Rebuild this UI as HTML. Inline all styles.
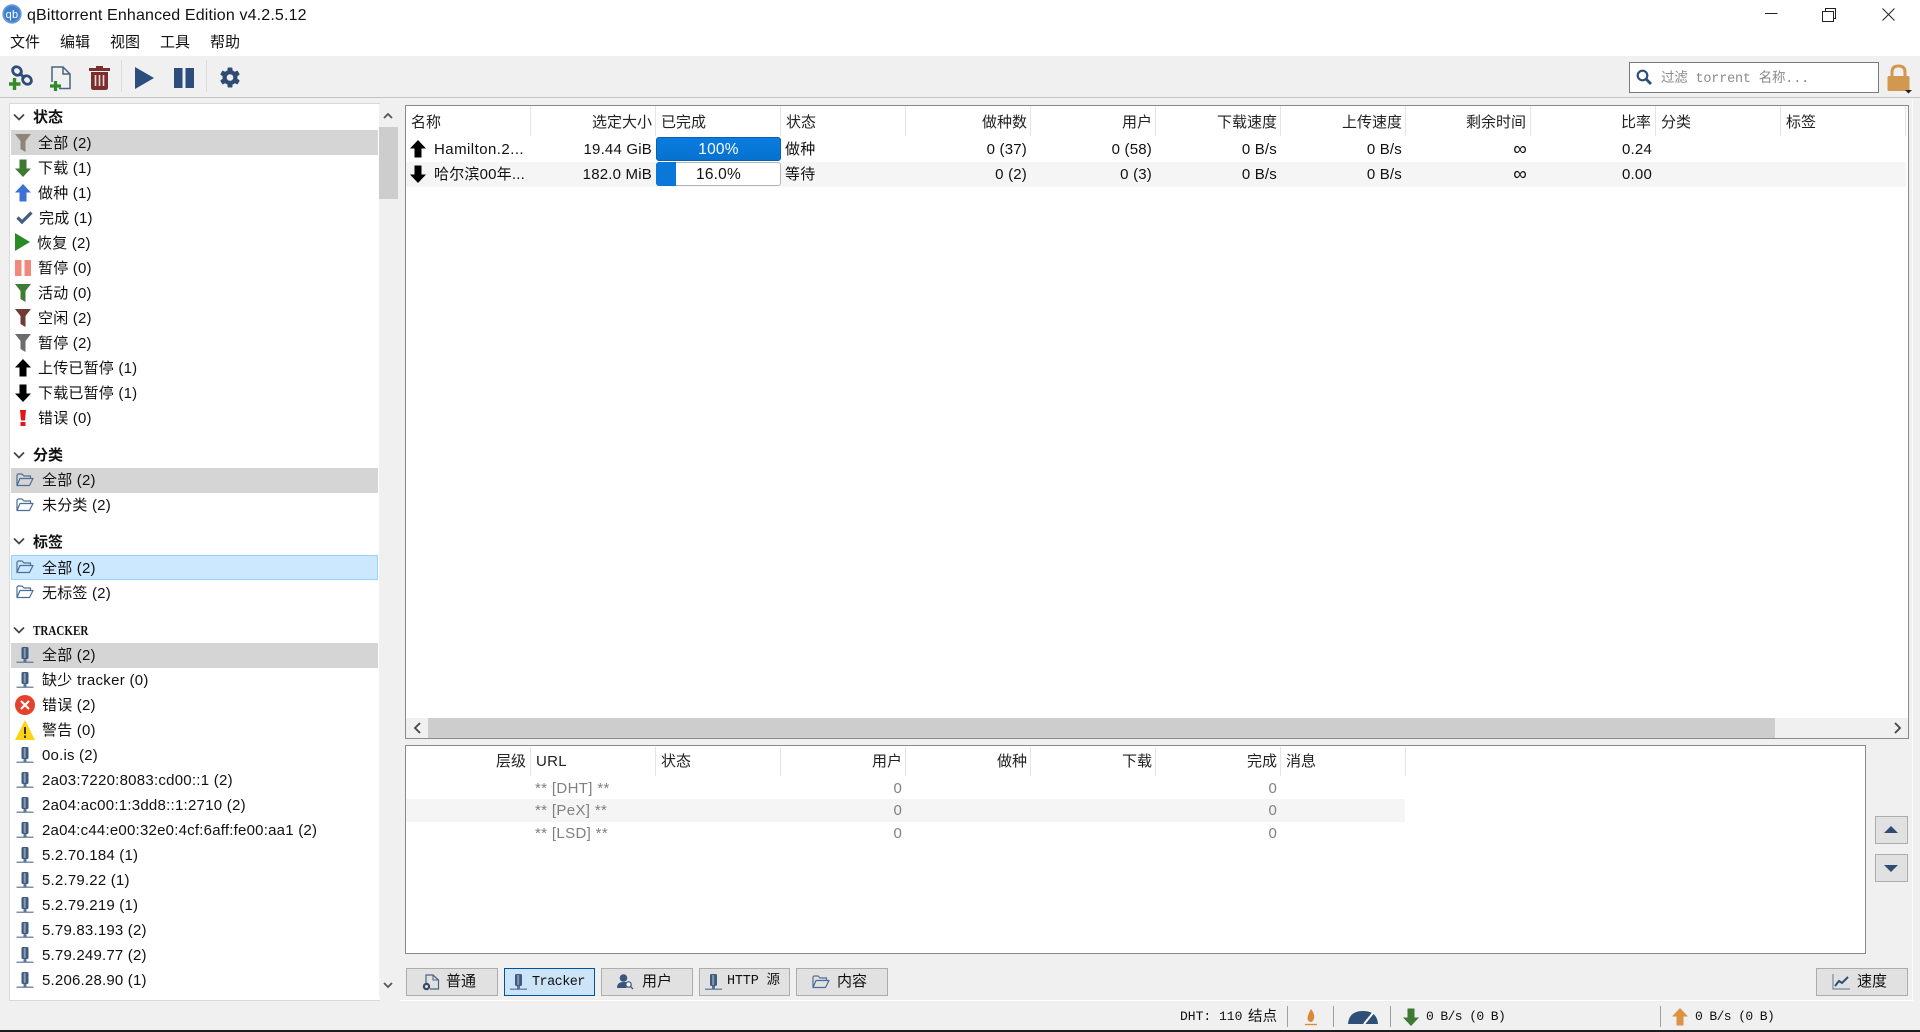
<!DOCTYPE html>
<html lang="zh"><head><meta charset="utf-8"><title>qBittorrent Enhanced Edition v4.2.5.12</title>
<style>
*{box-sizing:border-box}
html,body{margin:0;padding:0;width:1920px;height:1032px;overflow:hidden;background:#f0f0f0;font-family:"Liberation Sans","Noto Sans CJK SC",sans-serif;font-size:15px;color:#111;letter-spacing:.2px}
div,svg,span.a{position:absolute}
.t{position:absolute;white-space:nowrap;line-height:20px;height:20px;margin-top:1px}
.n{margin-top:0}
.r{text-align:right}
.h{color:#222;letter-spacing:0}
.m{font-family:"Liberation Mono","Noto Sans CJK SC",monospace}
.g{color:#808080}
.sep{position:absolute;width:1px;background:#e5e5e5}
.btn{position:absolute;background:#e1e1e1;border:1px solid #adadad;height:28px}
</style></head><body>
<svg width="0" height="0" style="position:absolute">
<defs>
<symbol id="funnel" viewBox="0 0 16 18"><path d="M0 0H16L10.500 7V18L5.500 15V7Z"/></symbol>
<symbol id="up" viewBox="0 0 16 18"><path d="M8 0L16 8.500H11.500V17.500H4.500V8.500H0Z"/></symbol>
<symbol id="dn" viewBox="0 0 16 18"><path d="M8 18L16 9.500H11.500V.5H4.500V9.500H0Z"/></symbol>
<symbol id="folder" viewBox="0 0 18 14"><path d="M1 12.500V2L2 1H6L8 3H14.500V5.500M1 12.500L4 5.500H17L13.500 12.500Z" fill="none" stroke="#4b6e96" stroke-width="1.200" stroke-linejoin="round"/></symbol>
<symbol id="trk" viewBox="0 0 17 16"><rect x="5" y="0" width="7" height="12" rx="1.500" fill="#3d5a80"/><rect x="7.200" y="1" width="2" height="10" fill="#8d99a8"/><rect x="7" y="12" width="3" height="3" fill="#5d7594"/><rect x="0" y="14.600" width="17" height="1.200" fill="#5a7596"/></symbol>
</defs></svg>

<!-- title bar -->
<div style="left:0;top:0;width:1920px;height:56px;background:#fff"></div>
<svg style="left:2px;top:4px" width="20" height="20" viewBox="0 0 20 20"><circle cx="10" cy="10" r="9.700" fill="#6c9ad6"/><circle cx="10" cy="10" r="8" fill="#3f7fcf"/><text x="10" y="14" font-size="11" font-family="Liberation Sans" fill="#fff" text-anchor="middle">qb</text></svg>
<span class="t" style="left:27px;top:5px;font-size:16px;letter-spacing:.15px">qBittorrent Enhanced Edition v4.2.5.12</span>
<span class="t" style="left:10px;top:32px;letter-spacing:0">文件</span>
<span class="t" style="left:60px;top:32px;letter-spacing:0">编辑</span>
<span class="t" style="left:110px;top:32px;letter-spacing:0">视图</span>
<span class="t" style="left:160px;top:32px;letter-spacing:0">工具</span>
<span class="t" style="left:210px;top:32px;letter-spacing:0">帮助</span>
<svg style="left:1765px;top:8px" width="130" height="14" viewBox="0 0 130 14" fill="none" stroke="#222" stroke-width="1"><path d="M0 5.500H12.500"/><path d="M57.500 3.500H68.500V13.500H57.500ZM60.500 3.500V.5H70.500V10.500H68.500"/><path d="M117.500 .5L129.500 12.500M129.500 .5L117.500 12.500"/></svg>

<!-- toolbar -->
<div style="left:0;top:97px;width:1920px;height:1px;background:#c4c4c4"></div>
<svg style="left:9px;top:65px" width="25" height="26" viewBox="0 0 25 26" fill="none"><g stroke="#2f4d78" stroke-width="2.800"><ellipse cx="8" cy="6" rx="4.600" ry="4" transform="rotate(40 8 6)"/><ellipse cx="18" cy="15" rx="4.600" ry="4" transform="rotate(40 18 15)"/><path d="M10 8L16 13"/></g><path d="M5.500 13V25M0 19H11.500" stroke="#338a2c" stroke-width="3.400"/></svg>
<svg style="left:50px;top:66px" width="22" height="25" viewBox="0 0 22 25" fill="none"><path d="M2 16V1H13L20 8V22.500H9" stroke="#4a6380" stroke-width="1.500"/><path d="M13 1V8H20" stroke="#4a6380" stroke-width="1.500"/><path d="M5.500 15V25M0 20H11" stroke="#338a2c" stroke-width="3.200"/></svg>
<svg style="left:89px;top:66px" width="21" height="24" viewBox="0 0 21 24"><path fill="#7b2f2d" d="M7 0H14V2H21V5H0V2H7ZM2 6H19V21.500Q19 24 16.500 24H4.500Q2 24 2 21.500Z"/><path d="M6.500 9V20M10.500 9V20M14.500 9V20" stroke="#e8d8d8" stroke-width="1.600"/></svg>
<div class="sep" style="left:121px;top:60px;height:32px;background:#dcdcdc"></div>
<svg style="left:135px;top:67px" width="20" height="22" viewBox="0 0 20 22"><path fill="#2c4d7d" d="M0 0L19 11L0 22Z"/></svg>
<svg style="left:174px;top:68px" width="20" height="20" viewBox="0 0 20 20"><path fill="#2c4d7d" d="M0 0H8.500V20H0ZM11.500 0H20V20H11.500Z"/></svg>
<div class="sep" style="left:206px;top:60px;height:32px;background:#dcdcdc"></div>
<svg style="left:220px;top:67px" width="20" height="21" viewBox="0 0 20 20"><g fill="#2f4a73"><circle cx="10" cy="10" r="7.500"/><rect x="7.500" y="0" width="5" height="20" rx="1"/><rect x="7.500" y="0" width="5" height="20" rx="1" transform="rotate(60 10 10)"/><rect x="7.500" y="0" width="5" height="20" rx="1" transform="rotate(120 10 10)"/></g><circle cx="10" cy="10" r="3.300" fill="#f0f0f0"/></svg>
<div style="left:1629px;top:62px;width:250px;height:31px;background:#fff;border:1px solid #7a7a7a"></div>
<svg style="left:1636px;top:69px" width="16" height="16" viewBox="0 0 16 16" fill="none" stroke="#2f4d78"><circle cx="6.500" cy="6.500" r="4.800" stroke-width="2.200"/><path d="M10 10L15 15" stroke-width="2.800"/></svg>
<span class="t m" style="left:1661px;top:69px;color:#8a8a8a;font-size:13.5px;letter-spacing:-.2px">过滤 torrent 名称...</span>
<svg style="left:1886px;top:64px" width="26" height="30" viewBox="0 0 26 30"><path d="M6 12V8Q6 2 12.500 2T19 8V12" fill="none" stroke="#d2984f" stroke-width="3"/><rect x="1.500" y="12" width="22" height="15" rx="1.500" fill="#d2984f"/><path d="M19 26H26L22.500 29.500Z" fill="#222"/></svg>

<!-- sidebar -->
<div style="left:9px;top:103px;width:371px;height:898px;background:#fff;border:1px solid #dadada;border-right:0"></div>
<div style="left:379px;top:104px;width:20px;height:892px;background:#f0f0f0"></div>
<div style="left:379px;top:127px;width:19px;height:72px;background:#cdcdcd"></div>
<svg style="left:383px;top:112px" width="10" height="7" viewBox="0 0 10 7" fill="none" stroke="#555" stroke-width="1.800"><path d="M1 6L5 2L9 6"/></svg>
<svg style="left:383px;top:982px" width="10" height="7" viewBox="0 0 10 7" fill="none" stroke="#555" stroke-width="1.800"><path d="M1 1L5 5L9 1"/></svg>
<div style="left:11px;top:130px;width:367px;height:25px;background:#d5d5d5"></div>
<div style="left:11px;top:468px;width:367px;height:25px;background:#d5d5d5"></div>
<div style="left:11px;top:555px;width:367px;height:25px;background:#cce8ff;border:1px solid #99d1ff"></div>
<div style="left:11px;top:643px;width:367px;height:25px;background:#d5d5d5"></div>

<svg style="left:12px;top:113px" width="14" height="9" viewBox="0 0 14 9" fill="none" stroke="#444" stroke-width="1.700"><path d="M2 1.500L7 6.500L12 1.500"/></svg>
<span class="t" style="left:33px;top:107px;font-weight:700;font-size:15px;letter-spacing:0">状态</span>
<svg style="left:12px;top:451px" width="14" height="9" viewBox="0 0 14 9" fill="none" stroke="#444" stroke-width="1.700"><path d="M2 1.500L7 6.500L12 1.500"/></svg>
<span class="t" style="left:33px;top:445px;font-weight:700;letter-spacing:0">分类</span>
<svg style="left:12px;top:537px" width="14" height="9" viewBox="0 0 14 9" fill="none" stroke="#444" stroke-width="1.700"><path d="M2 1.500L7 6.500L12 1.500"/></svg>
<span class="t" style="left:33px;top:532px;font-weight:700;letter-spacing:0">标签</span>
<svg style="left:12px;top:626px" width="14" height="9" viewBox="0 0 14 9" fill="none" stroke="#444" stroke-width="1.700"><path d="M2 1.500L7 6.500L12 1.500"/></svg>
<span class="t" style="left:33px;top:621px;font-weight:700;font-family:'Liberation Serif',serif;font-size:14px;letter-spacing:0;transform:scaleX(.79);transform-origin:0 50%">TRACKER</span>

<svg style="left:15px;top:134px;color:#8c8578" width="16" height="18" fill="currentColor"><use href="#funnel"/></svg>
<svg style="left:15px;top:159px;color:#3f7a35" width="16" height="18" fill="currentColor"><use href="#dn"/></svg>
<svg style="left:15px;top:184px;color:#3e70d6" width="16" height="18" fill="currentColor"><use href="#up"/></svg>
<svg style="left:16px;top:211px" width="17" height="13" viewBox="0 0 17 13" fill="none" stroke="#3f5e86" stroke-width="3.200"><path d="M1.500 6.500L6 11L15.500 1.500"/></svg>
<svg style="left:15px;top:233px" width="15" height="18" viewBox="0 0 15 18"><path fill="#2a8a26" d="M0 0L15 9L0 18Z"/></svg>
<svg style="left:15px;top:260px" width="16" height="16" viewBox="0 0 16 16"><path fill="#f2877c" d="M0 0H6.500V16H0ZM9.500 0H16V16H9.500Z"/></svg>
<svg style="left:15px;top:284px;color:#3f7c38" width="16" height="18" fill="currentColor"><use href="#funnel"/></svg>
<svg style="left:15px;top:309px;color:#703a38" width="16" height="18" fill="currentColor"><use href="#funnel"/></svg>
<svg style="left:15px;top:334px;color:#6c6c6c" width="16" height="18" fill="currentColor"><use href="#funnel"/></svg>
<svg style="left:15px;top:359px;color:#000" width="16" height="18" fill="currentColor"><use href="#up"/></svg>
<svg style="left:15px;top:384px;color:#000" width="16" height="18" fill="currentColor"><use href="#dn"/></svg>
<svg style="left:20px;top:410px" width="6" height="16" viewBox="0 0 6 16"><path fill="#e4141c" d="M0 0H6L5 10.500H1ZM.5 12H5.500V16H.5Z"/></svg>

<span class="t" style="left:38px;top:133px">全部 (2)</span>
<span class="t" style="left:38px;top:158px">下载 (1)</span>
<span class="t" style="left:38px;top:183px">做种 (1)</span>
<span class="t" style="left:39px;top:208px">完成 (1)</span>
<span class="t" style="left:37px;top:233px">恢复 (2)</span>
<span class="t" style="left:38px;top:258px">暂停 (0)</span>
<span class="t" style="left:38px;top:283px">活动 (0)</span>
<span class="t" style="left:38px;top:308px">空闲 (2)</span>
<span class="t" style="left:38px;top:333px">暂停 (2)</span>
<span class="t" style="left:38px;top:358px">上传已暂停 (1)</span>
<span class="t" style="left:38px;top:383px">下载已暂停 (1)</span>
<span class="t" style="left:38px;top:408px">错误 (0)</span>

<svg style="left:16px;top:473px" width="18" height="14"><use href="#folder"/></svg>
<svg style="left:16px;top:498px" width="18" height="14"><use href="#folder"/></svg>
<svg style="left:16px;top:560px" width="18" height="14"><use href="#folder"/></svg>
<svg style="left:16px;top:585px" width="18" height="14"><use href="#folder"/></svg>
<span class="t" style="left:42px;top:470px">全部 (2)</span>
<span class="t" style="left:42px;top:495px">未分类 (2)</span>
<span class="t" style="left:42px;top:558px">全部 (2)</span>
<span class="t" style="left:42px;top:583px">无标签 (2)</span>

<svg style="left:16px;top:647px" width="18" height="16"><use href="#trk"/></svg>
<svg style="left:16px;top:672px" width="18" height="16"><use href="#trk"/></svg>
<svg style="left:15px;top:695px" width="20" height="20" viewBox="0 0 20 20"><circle cx="10" cy="10" r="10" fill="#e5402a"/><path d="M6 6L14 14M14 6L6 14" stroke="#fff" stroke-width="2.200"/></svg>
<svg style="left:15px;top:720px" width="20" height="20" viewBox="0 0 20 20"><path d="M10 0L20 20H0Z" fill="#fbd417"/><path d="M10 7V14M10 15.500V18" stroke="#222" stroke-width="1.800"/></svg>
<svg style="left:16px;top:747px" width="18" height="16"><use href="#trk"/></svg>
<svg style="left:16px;top:772px" width="18" height="16"><use href="#trk"/></svg>
<svg style="left:16px;top:797px" width="18" height="16"><use href="#trk"/></svg>
<svg style="left:16px;top:822px" width="18" height="16"><use href="#trk"/></svg>
<svg style="left:16px;top:847px" width="18" height="16"><use href="#trk"/></svg>
<svg style="left:16px;top:872px" width="18" height="16"><use href="#trk"/></svg>
<svg style="left:16px;top:897px" width="18" height="16"><use href="#trk"/></svg>
<svg style="left:16px;top:922px" width="18" height="16"><use href="#trk"/></svg>
<svg style="left:16px;top:947px" width="18" height="16"><use href="#trk"/></svg>
<svg style="left:16px;top:972px" width="18" height="16"><use href="#trk"/></svg>
<span class="t" style="left:42px;top:645px">全部 (2)</span>
<span class="t" style="left:42px;top:670px;letter-spacing:.3px">缺少 tracker (0)</span>
<span class="t" style="left:42px;top:695px">错误 (2)</span>
<span class="t" style="left:42px;top:720px">警告 (0)</span>
<span class="t" style="left:42px;top:745px">0o.is (2)</span>
<span class="t" style="left:42px;top:770px;letter-spacing:.25px">2a03:7220:8083:cd00::1 (2)</span>
<span class="t" style="left:42px;top:795px;letter-spacing:.25px">2a04:ac00:1:3dd8::1:2710 (2)</span>
<span class="t" style="left:42px;top:820px;letter-spacing:.22px">2a04:c44:e00:32e0:4cf:6aff:fe00:aa1 (2)</span>
<span class="t" style="left:42px;top:845px">5.2.70.184 (1)</span>
<span class="t" style="left:42px;top:870px">5.2.79.22 (1)</span>
<span class="t" style="left:42px;top:895px">5.2.79.219 (1)</span>
<span class="t" style="left:42px;top:920px">5.79.83.193 (2)</span>
<span class="t" style="left:42px;top:945px">5.79.249.77 (2)</span>
<span class="t" style="left:42px;top:970px">5.206.28.90 (1)</span>

<!-- main table -->
<div style="left:405px;top:105px;width:1504px;height:634px;background:#fff;border:1px solid #8a8a8a"></div>
<div style="left:406px;top:162px;width:1500px;height:25px;background:#f5f5f5"></div>
<div class="sep" style="left:530px;top:106px;height:30px"></div>
<div class="sep" style="left:655px;top:106px;height:30px"></div>
<div class="sep" style="left:780px;top:106px;height:30px"></div>
<div class="sep" style="left:905px;top:106px;height:30px"></div>
<div class="sep" style="left:1030px;top:106px;height:30px"></div>
<div class="sep" style="left:1155px;top:106px;height:30px"></div>
<div class="sep" style="left:1280px;top:106px;height:30px"></div>
<div class="sep" style="left:1405px;top:106px;height:30px"></div>
<div class="sep" style="left:1530px;top:106px;height:30px"></div>
<div class="sep" style="left:1655px;top:106px;height:30px"></div>
<div class="sep" style="left:1780px;top:106px;height:30px"></div>
<div class="sep" style="left:1905px;top:106px;height:30px"></div>
<span class="t h" style="left:411px;top:112px">名称</span>
<span class="t h r" style="left:530px;width:122px;top:112px">选定大小</span>
<span class="t h" style="left:661px;top:112px">已完成</span>
<span class="t h" style="left:786px;top:112px">状态</span>
<span class="t h r" style="left:905px;width:122px;top:112px">做种数</span>
<span class="t h r" style="left:1030px;width:122px;top:112px">用户</span>
<span class="t h r" style="left:1155px;width:122px;top:112px">下载速度</span>
<span class="t h r" style="left:1280px;width:122px;top:112px">上传速度</span>
<span class="t h r" style="left:1405px;width:121px;top:112px">剩余时间</span>
<span class="t h r" style="left:1530px;width:121px;top:112px">比率</span>
<span class="t h" style="left:1661px;top:112px">分类</span>
<span class="t h" style="left:1786px;top:112px">标签</span>

<svg style="left:410px;top:140px;color:#000" width="16" height="18" fill="currentColor"><use href="#up"/></svg>
<svg style="left:410px;top:165px;color:#000" width="16" height="18" fill="currentColor"><use href="#dn"/></svg>
<span class="t" style="left:434px;top:139px;letter-spacing:.45px">Hamilton.2...</span>
<span class="t" style="left:434px;top:164px">哈尔滨00年...</span>
<span class="t r" style="left:530px;width:122px;top:139px">19.44 GiB</span>
<span class="t r" style="left:530px;width:122px;top:164px">182.0 MiB</span>
<div style="left:656px;top:137px;width:125px;height:24px;background:linear-gradient(#0a7ce0,#0672cf);border:1px solid #0a5fae;border-radius:3px;color:#fff;text-align:center;line-height:24px;font-size:15.500px">100%</div>
<div style="left:656px;top:162px;width:125px;height:24px;background:#fff;border:1px solid #b5b5b5;border-radius:3px"><div style="left:-1px;top:-1px;width:20px;height:24px;background:#0a78d8;border-radius:3px 0 0 3px"></div><span class="t n" style="left:0;width:123px;top:2px;text-align:center;font-size:15.500px">16.0%</span></div>
<span class="t" style="left:785px;top:139px">做种</span>
<span class="t" style="left:785px;top:164px">等待</span>
<span class="t r" style="left:905px;width:122px;top:139px">0 (37)</span>
<span class="t r" style="left:905px;width:122px;top:164px">0 (2)</span>
<span class="t r" style="left:1030px;width:122px;top:139px">0 (58)</span>
<span class="t r" style="left:1030px;width:122px;top:164px">0 (3)</span>
<span class="t r" style="left:1155px;width:122px;top:139px">0 B/s</span>
<span class="t r" style="left:1155px;width:122px;top:164px">0 B/s</span>
<span class="t r" style="left:1280px;width:122px;top:139px">0 B/s</span>
<span class="t r" style="left:1280px;width:122px;top:164px">0 B/s</span>
<span class="t r" style="left:1405px;width:122px;top:139px;font-size:19px">∞</span>
<span class="t r" style="left:1405px;width:122px;top:164px;font-size:19px">∞</span>
<span class="t r" style="left:1530px;width:122px;top:139px">0.24</span>
<span class="t r" style="left:1530px;width:122px;top:164px">0.00</span>
<!-- h scrollbar -->
<div style="left:406px;top:718px;width:1502px;height:20px;background:#f0f0f0"></div>
<div style="left:428px;top:718px;width:1347px;height:20px;background:#cdcdcd"></div>
<svg style="left:413px;top:722px" width="9" height="12" viewBox="0 0 9 12" fill="none" stroke="#444" stroke-width="1.800"><path d="M7 1L2 6L7 11"/></svg>
<svg style="left:1893px;top:722px" width="9" height="12" viewBox="0 0 9 12" fill="none" stroke="#444" stroke-width="1.800"><path d="M2 1L7 6L2 11"/></svg>

<!-- lower table -->
<div style="left:405px;top:745px;width:1461px;height:209px;background:#fff;border:1px solid #8a8a8a"></div>
<div style="left:406px;top:799px;width:999px;height:23px;background:#f5f5f5"></div>
<div class="sep" style="left:530px;top:747px;height:29px"></div>
<div class="sep" style="left:655px;top:747px;height:29px"></div>
<div class="sep" style="left:780px;top:747px;height:29px"></div>
<div class="sep" style="left:905px;top:747px;height:29px"></div>
<div class="sep" style="left:1030px;top:747px;height:29px"></div>
<div class="sep" style="left:1155px;top:747px;height:29px"></div>
<div class="sep" style="left:1280px;top:747px;height:29px"></div>
<div class="sep" style="left:1405px;top:747px;height:29px"></div>
<span class="t h r" style="left:405px;width:121px;top:751px">层级</span>
<span class="t h" style="left:536px;top:751px;letter-spacing:.3px">URL</span>
<span class="t h" style="left:661px;top:751px">状态</span>
<span class="t h r" style="left:780px;width:122px;top:751px">用户</span>
<span class="t h r" style="left:905px;width:122px;top:751px">做种</span>
<span class="t h r" style="left:1030px;width:122px;top:751px">下载</span>
<span class="t h r" style="left:1155px;width:122px;top:751px">完成</span>
<span class="t h" style="left:1286px;top:751px">消息</span>
<span class="t g" style="left:535px;top:778px;letter-spacing:.35px">** [DHT] **</span>
<span class="t g" style="left:535px;top:800px;letter-spacing:.35px">** [PeX] **</span>
<span class="t g" style="left:535px;top:823px;letter-spacing:.35px">** [LSD] **</span>
<span class="t g r" style="left:780px;width:122px;top:778px">0</span>
<span class="t g r" style="left:780px;width:122px;top:800px">0</span>
<span class="t g r" style="left:780px;width:122px;top:823px">0</span>
<span class="t g r" style="left:1155px;width:122px;top:778px">0</span>
<span class="t g r" style="left:1155px;width:122px;top:800px">0</span>
<span class="t g r" style="left:1155px;width:122px;top:823px">0</span>

<div class="btn" style="left:1875px;top:816px;width:33px"></div>
<div class="btn" style="left:1875px;top:854px;width:33px"></div>
<svg style="left:1884px;top:826px" width="14" height="8" viewBox="0 0 14 8"><path d="M7 0L14 7H0Z" fill="#2f4d72"/></svg>
<svg style="left:1884px;top:865px" width="14" height="8" viewBox="0 0 14 8"><path d="M7 7L14 0H0Z" fill="#2f4d72"/></svg>

<!-- frame lines -->
<div style="left:400px;top:1000px;width:1513px;height:1px;background:#fff"></div>
<div style="left:1912px;top:100px;width:1px;height:900px;background:#fbfbfb"></div>

<!-- bottom tabs -->
<div class="btn" style="left:406px;top:968px;width:92px"></div>
<div class="btn" style="left:504px;top:968px;width:91px;background:#cce4f7;border-color:#005499"></div>
<div class="btn" style="left:601px;top:968px;width:92px"></div>
<div class="btn" style="left:699px;top:968px;width:91px"></div>
<div class="btn" style="left:796px;top:968px;width:92px"></div>
<div class="btn" style="left:1816px;top:968px;width:92px"></div>
<svg style="left:422px;top:974px" width="18" height="17" viewBox="0 0 18 17" fill="none"><path d="M4 9V1H11L16.500 6V15H8" stroke="#4a6380" stroke-width="1.200"/><path d="M11 1V6H16.500" stroke="#4a6380" stroke-width="1"/><circle cx="4.500" cy="12.500" r="2.600" stroke="#3a4c66" stroke-width="2.200"/></svg>
<span class="t n" style="left:446px;top:972px;letter-spacing:0">普通</span>
<svg style="left:510px;top:974px" width="17" height="16"><use href="#trk"/></svg>
<span class="t m n" style="left:532px;top:973px;font-size:13.500px;letter-spacing:-.55px">Tracker</span>
<svg style="left:617px;top:974px" width="17" height="16" viewBox="0 0 17 16"><circle cx="6.500" cy="4" r="3.800" fill="#38577f"/><path d="M0 14Q0 8 6.500 8T12 10L9 14Z" fill="#38577f"/><circle cx="11.500" cy="10.500" r="2.700" fill="#fff" stroke="#38577f" stroke-width="1.200"/><path d="M13.500 12.500L16 15" stroke="#38577f" stroke-width="1.300"/></svg>
<span class="t n" style="left:642px;top:972px;letter-spacing:0">用户</span>
<svg style="left:705px;top:974px" width="17" height="16"><use href="#trk"/></svg>
<span class="t m n" style="left:727px;top:972px;font-size:13.500px;letter-spacing:-.2px">HTTP 源</span>
<svg style="left:812px;top:975px" width="18" height="14"><use href="#folder"/></svg>
<span class="t n" style="left:837px;top:972px;letter-spacing:0">内容</span>
<svg style="left:1832px;top:974px" width="18" height="16" viewBox="0 0 18 16" fill="none"><path d="M1 0V15H18" stroke="#7a8ba0" stroke-width="1.200"/><path d="M3 12L7 7L10 9L16 3" stroke="#2f4d78" stroke-width="2"/></svg>
<span class="t n" style="left:1857px;top:972px;letter-spacing:0">速度</span>

<!-- status bar -->
<span class="t m n" style="left:1180px;top:1007px;font-size:13px;letter-spacing:0">DHT: 110</span>
<span class="t n" style="left:1248px;top:1007px;font-size:14.500px;letter-spacing:0">结点</span>
<div class="sep" style="left:1287px;top:1006px;height:21px;background:#a0a0a0"></div>
<svg style="left:1304px;top:1009px" width="14" height="17" viewBox="0 0 14 17"><path d="M7 0Q11 5 10 9.500Q9 13 7 13Q4 13 3.500 9.500Q3.500 6 7 0Z" fill="#d9893a"/><path d="M1 15.500H13" stroke="#d9893a" stroke-width="1.300"/></svg>
<div class="sep" style="left:1333px;top:1006px;height:21px;background:#a0a0a0"></div>
<svg style="left:1347px;top:1010px" width="32" height="15" viewBox="0 0 32 15"><path d="M1 14Q2 1 16 1T31 14Z" fill="#2f4f78"/><path d="M17 14L26 3" stroke="#fff" stroke-width="2"/></svg>
<div class="sep" style="left:1390px;top:1006px;height:21px;background:#a0a0a0"></div>
<svg style="left:1403px;top:1008px;color:#3f7a35" width="16" height="18" fill="currentColor"><use href="#dn"/></svg>
<span class="t m n" style="left:1426px;top:1007px;font-size:13px;letter-spacing:-.6px">0 B/s (0 B)</span>
<div class="sep" style="left:1660px;top:1006px;height:21px;background:#a0a0a0"></div>
<svg style="left:1672px;top:1008px;color:#dc9343" width="16" height="18" fill="currentColor"><use href="#up"/></svg>
<span class="t m n" style="left:1695px;top:1007px;font-size:13px;letter-spacing:-.6px">0 B/s (0 B)</span>

<div style="left:0;top:1030px;width:1920px;height:2px;background:#1a1c20"></div>
</body></html>
